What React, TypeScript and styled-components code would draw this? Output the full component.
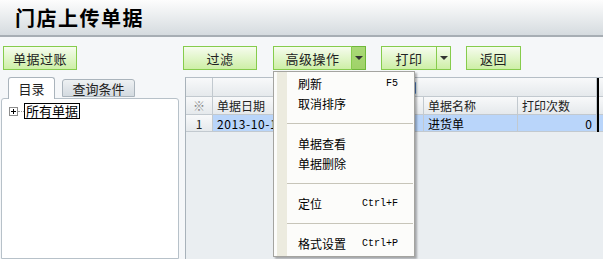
import styled, { createGlobalStyle } from "styled-components";

const GlobalStyle = createGlobalStyle`
  body {
    margin: 0;
    background: #f5f7f9;
    font-family: "Noto Sans CJK SC", "Liberation Sans", sans-serif;
    font-size: 12px;
    color: #000;
    overflow: hidden;
  }
`;

const Page = styled.div`
  width: 603px;
  height: 259px;
  overflow: hidden;
  display: flex;
  flex-direction: column;
`;

const TitleBar = styled.div`
  height: 35px;
  flex: none;
  display: flex;
  align-items: center;
  padding-left: 15px;
  background: linear-gradient(#fdfdfd, #d5dbdf);
  border-bottom: 2px solid #a7aeb4;
  font-size: 20px;
  font-weight: bold;
  letter-spacing: 1.5px;
  color: #000;
`;

const Toolbar = styled.div`
  flex: none;
  display: flex;
  align-items: flex-start;
  padding: 9px 0 0 3px;
  height: 24px;
`;

const LeftGroup = styled.div`
  width: 180px;
  flex: none;
`;

const Btn = styled.div<{ $w: number; $gap?: number }>`
  box-sizing: border-box;
  width: ${(p) => p.$w}px;
  height: 24px;
  margin-left: ${(p) => p.$gap ?? 0}px;
  display: flex;
  align-items: center;
  justify-content: center;
  border: 1px solid #86cc4c;
  background: linear-gradient(#f6fcee, #cdefa6);
  font-size: 13px;
  color: #222;
  letter-spacing: 0.5px;
`;

const Split = styled.div<{ $gap?: number }>`
  position: relative;
  display: flex;
  margin-left: ${(p) => p.$gap ?? 0}px;
`;

const ArrowPart = styled.div<{ $pressed?: boolean }>`
  box-sizing: border-box;
  width: 14px;
  height: 24px;
  display: flex;
  align-items: center;
  justify-content: center;
  border: 1px solid ${(p) => (p.$pressed ? "#6fb83a" : "#86cc4c")};
  border-left: none;
  background: ${(p) =>
    p.$pressed ? "linear-gradient(#a9d977, #9fd268)" : "linear-gradient(#f6fcee, #cdefa6)"};
`;

const Caret = styled.span`
  width: 0;
  height: 0;
  border-left: 4px solid transparent;
  border-right: 4px solid transparent;
  border-top: 4px solid #333;
`;

const Menu = styled.div`
  position: absolute;
  top: calc(100% + 1px);
  left: 0;
  width: 142px;
  box-sizing: border-box;
  padding: 1px 0 3px;
  border: 1px solid #a4a4a0;
  background: linear-gradient(
    to right,
    #fcfcfa 3px,
    #ecebdf 3px,
    #ecebdf 13px,
    #fcfcfa 13px
  );
  box-shadow: 2px 2px 2px rgba(0, 0, 0, 0.3);
  z-index: 10;
`;

const MenuItem = styled.div`
  height: 20px;
  display: flex;
  align-items: center;
  justify-content: space-between;
  padding: 0 16px 0 24px;
  font-size: 12px;
  color: #000;
`;

const Shortcut = styled.span`
  font-family: "Liberation Mono", monospace;
  font-size: 10px;
`;

const MenuSep = styled.div`
  height: 20px;
  display: flex;
  align-items: center;
  padding-left: 13px;
  padding-right: 1px;
  &::after {
    content: "";
    flex: 1;
    height: 1px;
    background: #c7c5b9;
  }
`;

const Content = styled.div`
  flex: 1;
  display: flex;
  margin-top: 7px;
  min-height: 0;
`;

const LeftCol = styled.div`
  width: 178px;
  margin-left: 1px;
  flex: none;
  display: flex;
  flex-direction: column;
`;

const TabRow = styled.div`
  height: 21px;
  display: flex;
  align-items: flex-end;
  gap: 7px;
  padding-left: 7px;
  position: relative;
  z-index: 1;
`;

const Tab = styled.div<{ $w: number; $active?: boolean }>`
  box-sizing: border-box;
  width: ${(p) => p.$w}px;
  height: ${(p) => (p.$active ? 22 : 18)}px;
  margin-bottom: ${(p) => (p.$active ? -1 : 1)}px;
  display: flex;
  align-items: center;
  justify-content: center;
  border: 1px solid #aab4bc;
  border-bottom: ${(p) => (p.$active ? "none" : "1px solid #aab4bc")};
  border-radius: 3px 3px 0 0;
  background: ${(p) => (p.$active ? "#fff" : "linear-gradient(#eef1f3, #d3dae0)")};
  font-size: 13px;
  color: #222;
`;

const TreePanel = styled.div`
  flex: 1;
  border: 1px solid #b7c1c9;
  border-radius: 3px 3px 0 0;
  background: #fff;
  padding: 4px 0 0 7px;
`;

const TreeRow = styled.div`
  display: flex;
  align-items: center;
`;

const PlusBox = styled.div`
  box-sizing: border-box;
  width: 9px;
  height: 9px;
  border: 1px solid #8c8c8c;
  background: #fff;
  position: relative;
  &::before {
    content: "";
    position: absolute;
    left: 1px;
    right: 1px;
    top: 3px;
    height: 1px;
    background: #000;
  }
  &::after {
    content: "";
    position: absolute;
    top: 1px;
    bottom: 1px;
    left: 3px;
    width: 1px;
    background: #000;
  }
`;

const Dots = styled.div`
  width: 6px;
  border-top: 1px dotted #999;
`;

const TreeLabel = styled.div`
  border: 1px solid #000;
  padding: 0 1px;
  height: 14px;
  line-height: 14px;
  font-size: 13px;
`;

const Grid = styled.div`
  flex: 1;
  margin-left: 6px;
  background: #eaeef1;
  border-left: 1px solid #a8b2ba;
  border-top: 1px solid #b5bec6;
`;

const GridRow = styled.div<{ $h: number }>`
  display: grid;
  grid-template-columns: 27px 87px 124px 94px 79px 2px 1fr;
  height: ${(p) => p.$h}px;
`;

const HeadCell = styled.div<{ $span?: number; $center?: boolean }>`
  grid-column: span ${(p) => p.$span ?? 1};
  box-sizing: border-box;
  display: flex;
  align-items: center;
  justify-content: ${(p) => (p.$center ? "center" : "flex-start")};
  padding-left: ${(p) => (p.$center ? 0 : 4)}px;
  background: linear-gradient(#f8f9fa, #e5e9ec);
  border-right: 1px solid #c2c9cf;
  border-bottom: 1px solid #c2c9cf;
  white-space: nowrap;
  overflow: hidden;
  color: #222;
`;

const DataCell = styled.div<{ $right?: boolean; $num?: boolean }>`
  box-sizing: border-box;
  display: flex;
  align-items: center;
  justify-content: ${(p) => (p.$right ? "flex-end" : "flex-start")};
  padding: 0 4px;
  background: #b9d5fa;
  border-right: 1px solid #c2c9cf;
  border-bottom: 1px solid #c2c9cf;
  white-space: nowrap;
  overflow: hidden;
  letter-spacing: ${(p) => (p.$num ? 0.6 : 0)}px;
`;

const Divider = styled.div`
  background: #000;
`;

const Star = styled.span`
  color: #888;
`;

const menuItems: ({ label: string; key?: string } | null)[] = [
  { label: "刷新", key: "F5" },
  { label: "取消排序" },
  null,
  { label: "单据查看" },
  { label: "单据删除" },
  null,
  { label: "定位", key: "Ctrl+F" },
  null,
  { label: "格式设置", key: "Ctrl+P" },
];

export default function App() {
  return (
    <Page>
      <GlobalStyle />
      <TitleBar>门店上传单据</TitleBar>
      <Toolbar>
        <LeftGroup>
          <Btn $w={74}>单据过账</Btn>
        </LeftGroup>
        <Btn $w={74}>过滤</Btn>
        <Split $gap={16}>
          <Btn $w={79}>高级操作</Btn>
          <ArrowPart $pressed>
            <Caret />
          </ArrowPart>
          <Menu>
            {menuItems.map((m, i) =>
              m ? (
                <MenuItem key={i}>
                  <span>{m.label}</span>
                  {m.key && <Shortcut>{m.key}</Shortcut>}
                </MenuItem>
              ) : (
                <MenuSep key={i} />
              )
            )}
          </Menu>
        </Split>
        <Split $gap={15}>
          <Btn $w={56}>打印</Btn>
          <ArrowPart>
            <Caret />
          </ArrowPart>
        </Split>
        <Btn $w={55} $gap={15}>返回</Btn>
      </Toolbar>
      <Content>
        <LeftCol>
          <TabRow>
            <Tab $w={47} $active>目录</Tab>
            <Tab $w={73}>查询条件</Tab>
          </TabRow>
          <TreePanel>
            <TreeRow>
              <PlusBox />
              <Dots />
              <TreeLabel>所有单据</TreeLabel>
            </TreeRow>
          </TreePanel>
        </LeftCol>
        <Grid>
          <GridRow $h={19}>
            <HeadCell />
            <HeadCell $span={4} $center>序列</HeadCell>
            <Divider />
            <HeadCell />
          </GridRow>
          <GridRow $h={18}>
            <HeadCell $center>
              <Star>※</Star>
            </HeadCell>
            <HeadCell>单据日期</HeadCell>
            <HeadCell>单据编号</HeadCell>
            <HeadCell>单据名称</HeadCell>
            <HeadCell>打印次数</HeadCell>
            <Divider />
            <HeadCell>打印日期</HeadCell>
          </GridRow>
          <GridRow $h={17}>
            <HeadCell $center>1</HeadCell>
            <DataCell $num>2013-10-15</DataCell>
            <DataCell $num>2013101500001</DataCell>
            <DataCell>进货单</DataCell>
            <DataCell $right>0</DataCell>
            <Divider />
            <DataCell $num>2013-10-15</DataCell>
          </GridRow>
        </Grid>
      </Content>
    </Page>
  );
}
